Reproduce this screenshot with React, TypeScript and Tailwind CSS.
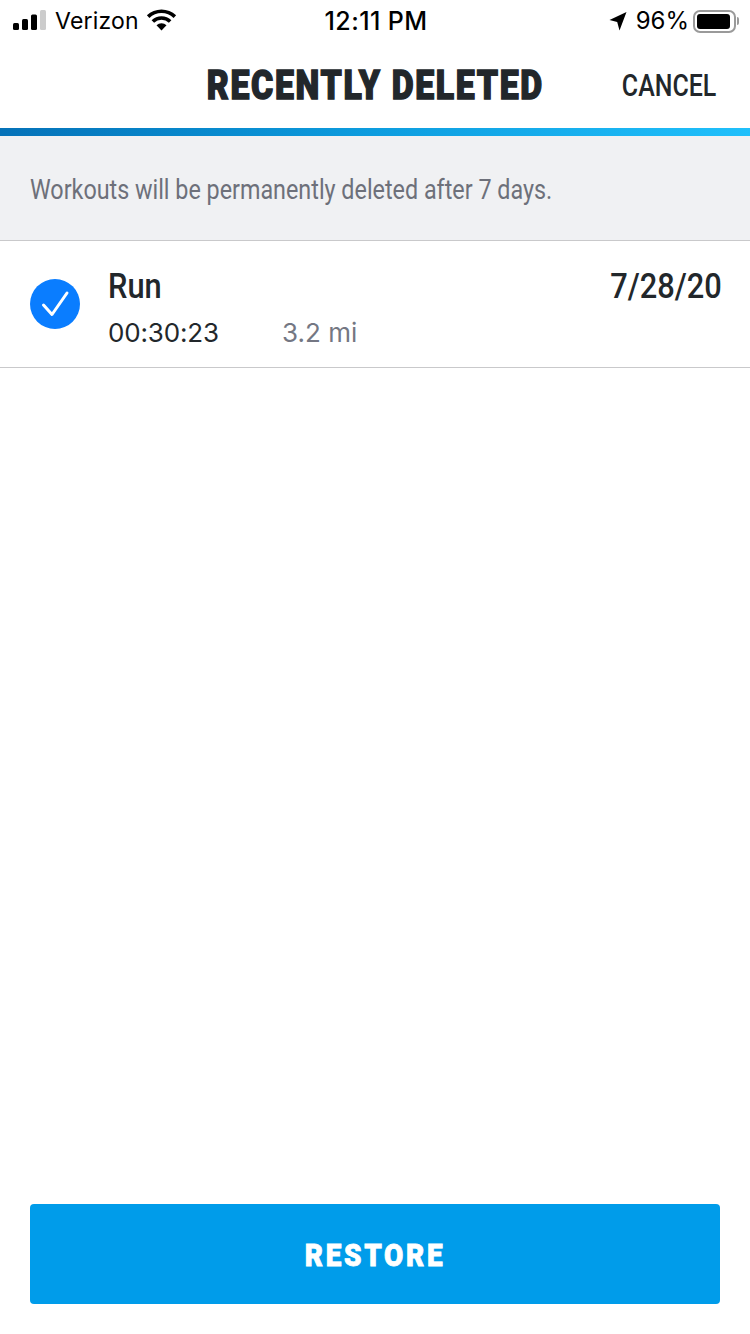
const sans = "font-['Inter','Liberation_Sans',sans-serif]"

function StatusBar() {
  return (
    <div className="flex h-[42px] items-center justify-between pl-[13px] pr-[11px] text-[25px] text-black font-['Inter',sans-serif]">
      <div className="flex w-[250px] items-center">
        <svg width="34" height="20" viewBox="0 0 34 20" className="mb-[3px]">
          <rect x="0" y="13" width="6" height="7" rx="1.5" fill="#000" />
          <rect x="9" y="9" width="6" height="11" rx="1.5" fill="#000" />
          <rect x="18" y="4.5" width="6" height="15.5" rx="1.5" fill="#000" />
          <rect x="27" y="0" width="6" height="20" rx="1.5" fill="#ccc" />
        </svg>
        <span className="ml-[8px] text-[23px] tracking-[0.2px] leading-none">Verizon</span>
        <svg width="31" height="22" viewBox="0 0 30 22" className="ml-[7px] mb-[2px]">
          <path d="M15 21.5l-5-5.2a7.2 7.2 0 0 1 10 0z" fill="#000" />
          <path d="M7.6 13.8l-2.5-2.6a14.3 14.3 0 0 1 19.8 0l-2.5 2.6a10.8 10.8 0 0 0-14.8 0z" fill="#000" />
          <path d="M2.9 8.9L.4 6.3a21.2 21.2 0 0 1 29.2 0l-2.5 2.6a17.6 17.6 0 0 0-24.2 0z" fill="#000" />
        </svg>
      </div>
      <span className="text-[25px] font-medium tracking-[0.4px] leading-none">12:11 PM</span>
      <div className="flex w-[250px] items-center justify-end">
        <svg width="18" height="20" viewBox="0 0 18 20" className="mb-[1px]">
          <path d="M17.5 1L10.5 19.5 8.2 11 .5 9z" fill="#000" />
        </svg>
        <span className="ml-[9px] text-[24px] leading-none">96%</span>
        <div className="ml-[4px] flex items-center">
          <div className="flex h-[23px] w-[43px] items-center rounded-[7px] border-2 border-[#9a9a9a] p-[2px]">
            <div className="h-full w-[93%] rounded-[3px] bg-black" />
          </div>
          <div className="ml-[1px] h-[8px] w-[2px] rounded-r-sm bg-[#9a9a9a]" />
        </div>
      </div>
    </div>
  )
}

export default function App() {
  return (
    <div className={`flex h-[1334px] w-[750px] flex-col overflow-hidden bg-white ${sans}`}>
      <StatusBar />
      {/* Nav */}
      <div className="relative flex h-[86px] items-center justify-center">
        <h1 className="origin-center scale-x-[0.825] whitespace-nowrap font-['Roboto',sans-serif] text-[41px] font-black leading-none tracking-[2px] text-[#22272b] [-webkit-text-stroke:1.4px_#22272b]">
          RECENTLY DELETED
        </h1>
        <button className="absolute right-[34px] top-[28px] origin-right scale-x-[0.805] whitespace-nowrap font-['Roboto',sans-serif] text-[31px] font-medium leading-none text-[#22272b]">
          CANCEL
        </button>
      </div>
      <div className="h-[8px] bg-gradient-to-r from-[#0572b8] via-[#0d9ddf] to-[#20c0fb]" />

      {/* Notice */}
      <div className="flex h-[105px] items-center border-b border-[#c9c9cb] bg-[#f0f1f3] px-[30px] pt-[4px]">
        <p className="origin-left scale-x-[0.864] whitespace-nowrap font-['Roboto',sans-serif] text-[27px] leading-none text-[#6d707a]">
          Workouts will be permanently deleted after 7 days.
        </p>
      </div>

      {/* Deleted workout */}
      <div className="flex h-[127px] items-start border-b border-[#c9c9cb] pl-[30px] pr-[28px]">
        <div className="mt-[38px] flex h-[50px] w-[50px] items-center justify-center rounded-full bg-[#0a7dff]">
          <svg width="50" height="50" viewBox="0 0 50 50" fill="none">
            <path d="M13.5 26L22 35.5 37 14" stroke="#fff" strokeWidth="3" strokeLinecap="round" strokeLinejoin="round" />
          </svg>
        </div>
        <div className="ml-[28px] flex-1">
          <div className="mt-[28px] origin-left scale-x-[0.88] font-['Roboto',sans-serif] text-[35px] font-medium leading-[36px] text-[#22272b]">
            Run
          </div>
          <div className="mt-[13px] flex text-[26px] leading-[30px]">
            <span className="w-[174px] tracking-[-0.15px] text-[#22272b]">00:30:23</span>
            <span className="text-[#747783]">3.2 mi</span>
          </div>
        </div>
        <div className="mt-[28px] origin-right scale-x-[0.88] font-['Roboto',sans-serif] text-[35px] font-medium leading-[36px] text-[#22272b]">
          7/28/20
        </div>
      </div>

      {/* Restore */}
      <div className="mt-auto px-[30px] pb-[30px]">
        <button className="flex h-[100px] w-full items-center justify-center rounded-[4px] bg-[#009cea] pt-[3px]">
          <span className="origin-center scale-x-[0.9] font-['Roboto',sans-serif] text-[31px] font-black leading-none tracking-[3px] text-white [-webkit-text-stroke:0.8px_#fff]">
            RESTORE
          </span>
        </button>
      </div>
    </div>
  )
}
